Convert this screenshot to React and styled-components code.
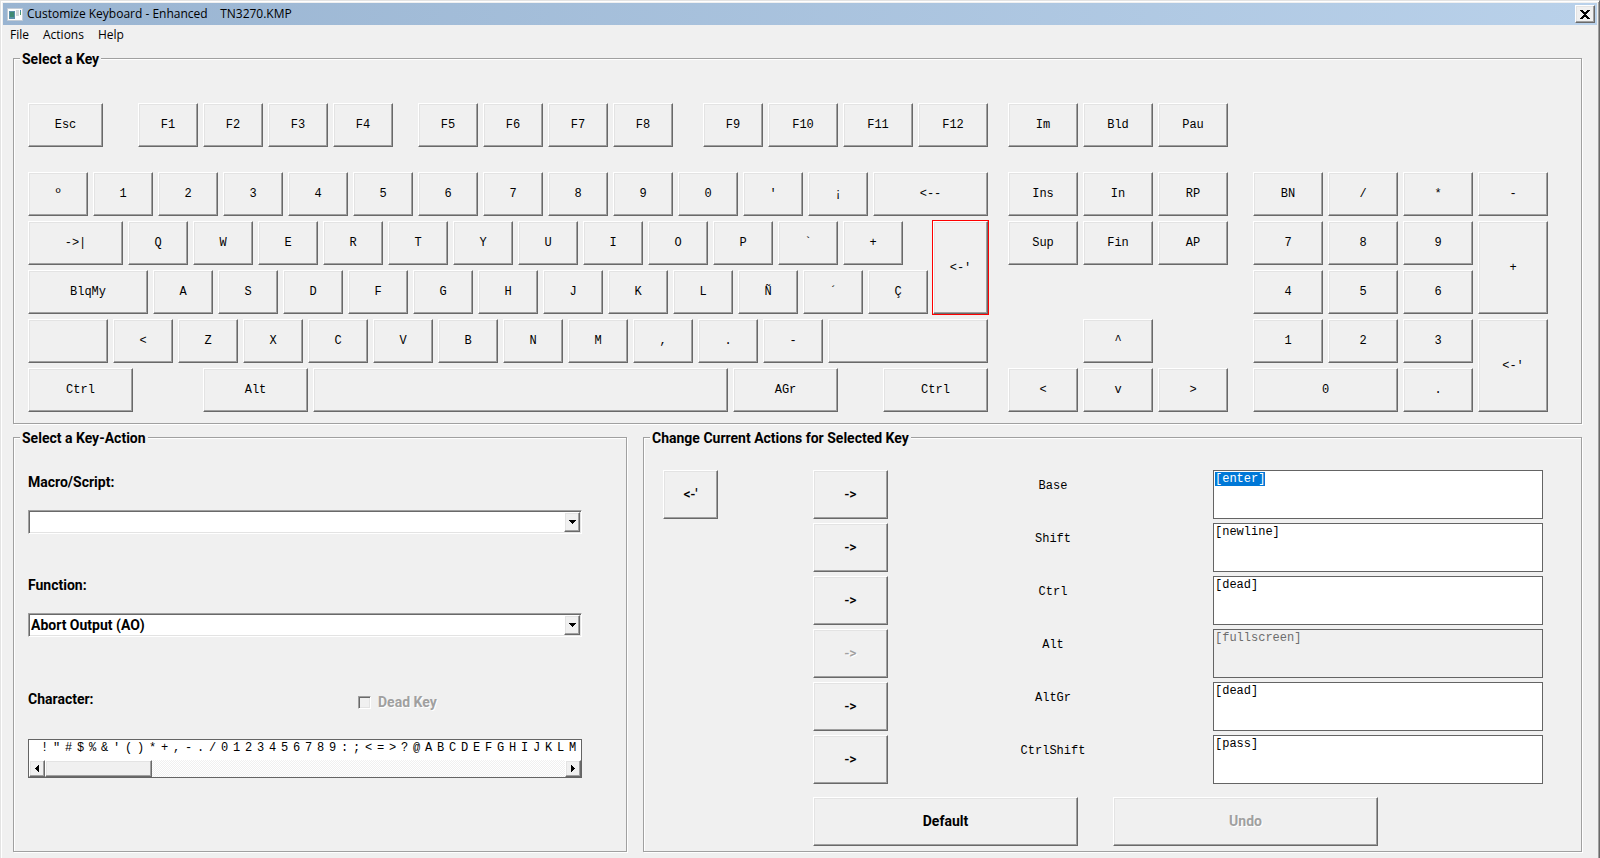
import React, { useEffect, useRef } from 'react';
import styled, { createGlobalStyle, css } from 'styled-components';

const SANS = "Roboto, 'Liberation Sans', sans-serif";
const MONO = "'Liberation Mono', monospace";
const UI = "'Open Sans', 'Noto Sans', sans-serif";

const GlobalStyle = createGlobalStyle`
  *, *::before, *::after { box-sizing: border-box; }
  body { margin: 0; background: #f0f0f0; color: #000; }
  button, input, select, textarea { margin: 0; color: inherit; border-radius: 0; }
`;

const raised = css`
  background: #f0f0f0;
  border: 1px solid;
  border-color: #fff #696969 #696969 #fff;
  box-shadow: inset -1px -1px 0 #a0a0a0, inset 1px 1px 0 #e3e3e3;
`;

const Window = styled.div`
  min-height: 100vh;
  padding: 2px 2px 0;
  background: #f0f0f0;
  border: solid;
  border-width: 1px 1px 0;
  border-color: #e3e3e3 #696969 #e3e3e3 #e3e3e3;
  box-shadow: inset 1px 1px 0 #fff, inset -1px 0 0 #a0a0a0;
`;

const TitleBar = styled.header`
  display: flex;
  align-items: center;
  gap: 4px;
  height: 22px;
  padding: 0 2px 0 4px;
  background: linear-gradient(to right, #99b4d1, #b9d1ea);
`;

const Title = styled.h1`
  flex: 1;
  margin: 0;
  font: 400 12px/16px ${UI};
  white-space: pre;
`;

const CloseButton = styled.button`
  ${raised}
  display: flex;
  align-items: center;
  justify-content: center;
  width: 20px;
  height: 18px;
  padding: 0;
`;

const MenuBar = styled.nav`
  display: flex;
  gap: 14px;
  height: 20px;
  padding: 0 7px;
`;

const MenuItem = styled.button`
  padding: 0;
  border: 0;
  background: none;
  font: 400 12px/20px ${UI};
`;

const Main = styled.main`
  display: flex;
  flex-direction: column;
  gap: 4px;
  padding: 4px 15px 6px 10px;
`;

const Panels = styled.div`
  display: grid;
  grid-template-columns: minmax(0, 614fr) minmax(0, 939fr);
  column-gap: 16px;
`;

const Group = styled.fieldset`
  min-width: 0;
  margin: 0;
  padding: ${(p) => p.$pad};
  border: 1px solid #a0a0a0;
  box-shadow: 1px 1px 0 #fff, inset 1px 1px 0 #fff;
`;

const GroupTitle = styled.legend`
  margin-left: ${(p) => p.$shift};
  padding: 2px 2px 0;
  background: #f0f0f0;
  font: 700 14px/16px ${SANS};
`;

const Keyboard = styled.div`
  display: grid;
  grid-template-columns: repeat(305, minmax(0, 1fr));
  grid-template-rows: 44px 15px repeat(5, 44px);
  row-gap: 5px;
`;

const Key = styled.button`
  ${raised}
  grid-column: ${(p) => p.$col} / span ${(p) => p.$span};
  grid-row: ${(p) => p.$row} / span ${(p) => p.$rows};
  margin-right: 5px;
  padding: 0;
  font: 400 12px/14px ${MONO};
  outline: ${(p) => (p.$selected ? '1px solid #f00' : 'none')};
`;

const ActionForm = styled.div`
  display: flex;
  flex-direction: column;
`;

const FieldLabel = styled.label`
  font: 700 14px/16px ${SANS};
`;

const ComboField = styled.div`
  display: flex;
  flex-direction: column;
  gap: 20px;
  margin-bottom: ${(p) => p.$after};
`;

const ComboFrame = styled.div`
  position: relative;
  height: 24px;
  border: 1px solid;
  border-color: #a0a0a0 #fff #fff #a0a0a0;
  background: #fff;
  box-shadow: inset 1px 1px 0 #696969, inset -1px -1px 0 #e3e3e3;
`;

const Combo = styled.select`
  appearance: none;
  display: block;
  width: 100%;
  height: 22px;
  padding: 0 20px 0 2px;
  border: 0;
  background: none;
  font: 700 14px/18px ${SANS};
`;

const ComboArrow = styled.span`
  ${raised}
  position: absolute;
  top: 1px;
  right: 1px;
  bottom: 1px;
  display: flex;
  align-items: center;
  justify-content: center;
  width: 16px;
  pointer-events: none;
`;

const CharacterHead = styled.div`
  display: grid;
  grid-template-columns: 330fr 224fr;
  align-items: start;
  margin-bottom: 29px;
`;

const DeadKey = styled.label`
  display: flex;
  align-items: center;
  gap: 7px;
  padding-top: 3px;
  color: #a0a0a0;
  font: 700 14px/16px ${SANS};
  text-shadow: 1px 1px 0 #fff;
`;

const Tick = styled.input`
  appearance: none;
  width: 13px;
  height: 13px;
  background: #f0f0f0;
  border: 1px solid;
  border-color: #a0a0a0 #fff #fff #a0a0a0;
  box-shadow: inset 1px 1px 0 #696969, inset -1px -1px 0 #e3e3e3;
`;

const CharacterBox = styled.div`
  border: 1px solid #646464;
  background: #fff;
`;

const CharacterList = styled.div`
  display: grid;
  grid-template-columns: repeat(46, minmax(0, 1fr));
  height: 20px;
  padding-top: 1px;
  font: 400 12px/14px ${MONO};
`;

const Character = styled.span`
  white-space: pre;
`;

const ScrollBar = styled.div`
  display: flex;
  height: 17px;
  background: repeating-conic-gradient(#fff 0 25%, #f0f0f0 0 50%) 0 0 / 2px 2px;
`;

const ScrollButton = styled.button`
  ${raised}
  display: flex;
  align-items: center;
  justify-content: center;
  width: 16px;
  padding: 0;
`;

const Thumb = styled.div`
  ${raised}
  width: 107px;
  margin-right: auto;
`;

const Assignments = styled.div`
  display: flex;
  flex-direction: column;
  gap: 4px;
  margin-bottom: 13px;
`;

const Assignment = styled.div`
  display: grid;
  grid-template-columns: 150fr 75fr 325fr 330fr;
`;

const PushButton = styled.button`
  ${raised}
  grid-column: ${(p) => p.$col};
  width: ${(p) => p.$width || 'auto'};
  height: 49px;
  padding: 0 0 2px;
  font: ${(p) => p.$weight || 700} 14px/16px ${SANS};

  &:disabled {
    color: #a0a0a0;
    text-shadow: 1px 1px 0 #fff;
  }
`;

const ModifierLabel = styled.label`
  grid-column: 3;
  padding: 9px 0 0 5px;
  font: 400 12px/14px ${MONO};
  text-align: center;
`;

const ActionText = styled.textarea`
  grid-column: 4;
  width: 100%;
  height: 49px;
  padding: 1px;
  border: 1px solid #646464;
  background: #fff;
  font: 400 12px/14px ${MONO};
  outline: none;
  resize: none;

  &::selection { background: #0078d7; color: #fff; }

  &:disabled {
    background: #f0f0f0;
    color: #6d6d6d;
  }
`;

const Commands = styled.div`
  display: grid;
  grid-template-columns: 150fr 265fr 35fr 265fr 165fr;
`;

// Key rows: [label, width, rows spanned]; a bare number is an empty stretch.
// Widths are in keyboard units, without the one-unit gap after each key.
const letters = (text) => [...text].map((c) => [c, 12]);
const KEY_ROWS = [
  { row: 1, keys: [['Esc', 15], 6, ['F1', 12], ['F2', 12], ['F3', 12], ['F4', 12], 4,
    ['F5', 12], ['F6', 12], ['F7', 12], ['F8', 12], 5,
    ['F9', 12], ['F10', 14], ['F11', 14], ['F12', 14], 3,
    ['Im', 14], ['Bld', 14], ['Pau', 14]] },
  { row: 3, keys: [...letters("º1234567890'¡"), ['<--', 23], 3,
    ['Ins', 14], ['In', 14], ['RP', 14], 4,
    ['BN', 14], ['/', 14], ['*', 14], ['-', 14]] },
  { row: 4, keys: [['->|', 19], ...letters('QWERTYUIOP`+'), 5, ["<-'", 11, 2, true], 3,
    ['Sup', 14], ['Fin', 14], ['AP', 14], 4,
    ['7', 14], ['8', 14], ['9', 14], ['+', 14, 2]] },
  { row: 5, keys: [['BlqMy', 24], ...letters('ASDFGHJKLÑ´Ç'), 64,
    ['4', 14], ['5', 14], ['6', 14]] },
  { row: 6, keys: [['', 16, 1, false, 'Left Shift'], ...letters('<ZXCVBNM,.-'), ['', 32, 1, false, 'Right Shift'], 18,
    ['^', 14], 19, ['1', 14], ['2', 14], ['3', 14], ["<-'", 14, 2]] },
  { row: 7, keys: [['Ctrl', 21], 13, ['Alt', 21], ['', 83, 1, false, 'Space'], ['AGr', 21], 8, ['Ctrl', 21], 3,
    ['<', 14], ['v', 14], ['>', 14], 4, ['0', 29], ['.', 14]] },
];

const KEYS = KEY_ROWS.flatMap(({ row, keys }) => {
  let col = 1;
  return keys.flatMap((key) => {
    if (typeof key === 'number') {
      col += key;
      return [];
    }
    const [label, width, rows = 1, selected = false, name] = key;
    const placed = { label, row, rows, selected, name, col, span: width + 1 };
    col += width + 1;
    return [placed];
  });
});

const ACTIONS = [
  { name: 'Base', value: '[enter]' },
  { name: 'Shift', value: '[newline]' },
  { name: 'Ctrl', value: '[dead]' },
  { name: 'Alt', value: '[fullscreen]', disabled: true },
  { name: 'AltGr', value: '[dead]' },
  { name: 'CtrlShift', value: '[pass]' },
];

const CHARACTERS = [..." !\"#$%&'()*+,-./0123456789:;<=>?@ABCDEFGHIJKLM"];

const WindowIcon = () => (
  <svg width="16" height="13" viewBox="0 0 16 13" aria-hidden="true">
    <path fill="#fdfdfd" stroke="#c3ccd6" d="M.5.5h15v12H.5z" />
    <path fill="#5b8fa8" d="M2 3h6v8H2z" />
    <path fill="#3f8a72" d="M3 4h4v5H3z" />
    <path fill="#d3d6da" d="M9 2h3v6H9z" />
    <path fill="#4a86a8" d="M13 2h1v2h-1z" />
    <path fill="#4a9a6d" d="M13 4h1v3h-1z" />
  </svg>
);

const CloseIcon = () => (
  <svg width="10" height="9" viewBox="0 0 10 9" shapeRendering="crispEdges" aria-hidden="true">
    <path d="M0 0h3v1h1v1h2V1h1V0h3v1H9v1H8v1H7v1H6v1h1v1h1v1h1v1h1v1H7V8H6V7H4v1H3v1H0V8h1V7h1V6h1V5h1V4H3V3H2V2H1V1H0z" />
  </svg>
);

const Triangle = ({ d, width, height }) => (
  <svg width={width} height={height} viewBox={`0 0 ${width} ${height}`} shapeRendering="crispEdges" aria-hidden="true">
    <path d={d} />
  </svg>
);

export default function App() {
  const firstAction = useRef(null);

  useEffect(() => {
    firstAction.current.focus({ preventScroll: true });
    firstAction.current.select();
  }, []);

  return (
    <>
      <GlobalStyle />
      <Window>
        <TitleBar>
          <WindowIcon />
          <Title>{'Customize Keyboard - Enhanced    TN3270.KMP'}</Title>
          <CloseButton type="button" aria-label="Close"><CloseIcon /></CloseButton>
        </TitleBar>
        <MenuBar>
          <MenuItem type="button">File</MenuItem>
          <MenuItem type="button">Actions</MenuItem>
          <MenuItem type="button">Help</MenuItem>
        </MenuBar>
        <Main>
          <Group $pad="36px 28px 11px 14px">
            <GroupTitle $shift="-8px">Select a Key</GroupTitle>
            <Keyboard>
              {KEYS.map((k) => (
                <Key
                  key={`${k.row}-${k.col}`}
                  type="button"
                  aria-label={k.name}
                  $col={k.col}
                  $span={k.span}
                  $row={k.row}
                  $rows={k.rows}
                  $selected={k.selected}
                >
                  {k.label}
                </Key>
              ))}
            </Keyboard>
          </Group>
          <Panels>
            <Group $pad="28px 44px 5px 14px">
              <GroupTitle $shift="-8px">Select a Key-Action</GroupTitle>
              <ActionForm>
                <ComboField $after="43px">
                  <FieldLabel htmlFor="macro">Macro/Script:</FieldLabel>
                  <ComboFrame>
                    <Combo id="macro" defaultValue=""><option value="" /></Combo>
                    <ComboArrow><Triangle width={7} height={4} d="M0 0h7v1H6v1H5v1H4v1H3V3H2V2H1V1H0z" /></ComboArrow>
                  </ComboFrame>
                </ComboField>
                <ComboField $after="54px">
                  <FieldLabel htmlFor="function">Function:</FieldLabel>
                  <ComboFrame>
                    <Combo id="function"><option>Abort Output (AO)</option></Combo>
                    <ComboArrow><Triangle width={7} height={4} d="M0 0h7v1H6v1H5v1H4v1H3V3H2V2H1V1H0z" /></ComboArrow>
                  </ComboFrame>
                </ComboField>
                <CharacterHead>
                  <FieldLabel as="span" id="character">Character:</FieldLabel>
                  <DeadKey><Tick type="checkbox" disabled />Dead Key</DeadKey>
                </CharacterHead>
                <CharacterBox>
                  <CharacterList role="listbox" aria-labelledby="character">
                    {CHARACTERS.map((c) => <Character role="option" key={c}>{c}</Character>)}
                  </CharacterList>
                  <ScrollBar>
                    <ScrollButton type="button" aria-label="Scroll left">
                      <Triangle width={4} height={7} d="M4 0v7H3V6H2V5H1V4H0V3h1V2h1V1h1V0z" />
                    </ScrollButton>
                    <Thumb />
                    <ScrollButton type="button" aria-label="Scroll right">
                      <Triangle width={4} height={7} d="M0 0v7h1V6h1V5h1V4h1V3H3V2H2V1H1V0z" />
                    </ScrollButton>
                  </ScrollBar>
                </CharacterBox>
              </ActionForm>
            </Group>
            <Group $pad="24px 38px 5px 19px">
              <GroupTitle $shift="-13px">Change Current Actions for Selected Key</GroupTitle>
              <Assignments>
                {ACTIONS.map((a, i) => (
                  <Assignment key={a.name}>
                    {i === 0 && <PushButton type="button" $col={1} $width="55px" $weight={500}>{"<-'"}</PushButton>}
                    <PushButton type="button" $col={2} $weight={500} disabled={a.disabled}>{'->'}</PushButton>
                    <ModifierLabel htmlFor={`action-${a.name}`}>{a.name}</ModifierLabel>
                    <ActionText
                      id={`action-${a.name}`}
                      ref={i === 0 ? firstAction : null}
                      defaultValue={a.value}
                      disabled={a.disabled}
                      spellCheck={false}
                    />
                  </Assignment>
                ))}
              </Assignments>
              <Commands>
                <PushButton type="button" $col={2}>Default</PushButton>
                <PushButton type="button" $col={4} disabled>Undo</PushButton>
              </Commands>
            </Group>
          </Panels>
        </Main>
      </Window>
    </>
  );
}
